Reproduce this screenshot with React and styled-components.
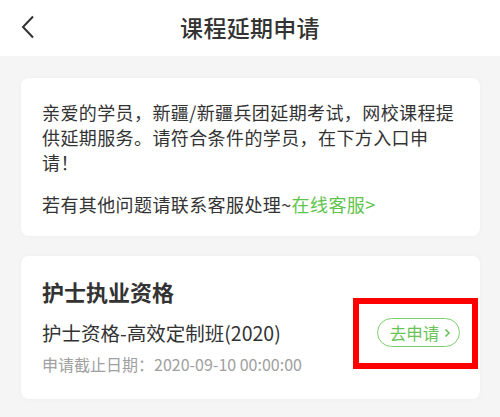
import React from 'react';
import styled, { createGlobalStyle } from 'styled-components';

const GlobalStyle = createGlobalStyle`
  html, body {
    margin: 0;
    padding: 0;
    background: #f5f5f5;
  }
  body {
    font-family: "Noto Sans CJK SC", "Noto Sans", "Liberation Sans", sans-serif;
    color: #333;
  }
`;

const Page = styled.div`
  width: 500px;
  height: 417px;
  background: #f5f5f5;
  overflow: hidden;
`;

const Header = styled.header`
  height: 56px;
  background: #fff;
  display: flex;
  align-items: center;
  justify-content: center;
  position: relative;
`;

const BackButton = styled.button`
  position: absolute;
  left: 16px;
  top: 11px;
  width: 24px;
  height: 32px;
  padding: 0;
  border: 0;
  background: none;
  display: flex;
  align-items: center;
  justify-content: center;
`;

const Title = styled.h1`
  margin: 0 0 2px;
  font-size: 23px;
  font-weight: 500;
  color: #333;
  letter-spacing: 0.3px;
`;

const Body = styled.main`
  padding: 22px 20px 0 21px;
  display: flex;
  flex-direction: column;
  gap: 20px;
`;

const Card = styled.section`
  background: #fff;
  border-radius: 8px;
  box-shadow: 0 0 6px rgba(0, 0, 0, 0.03);
  padding: ${p => p.$pad};
`;

const Para = styled.p`
  margin: 0 0 ${p => p.$gap || 0}px;
  font-size: 18px;
  line-height: 25px;
  letter-spacing: 0.4px;
  color: #333;
`;

const Link = styled.a`
  color: #5fc44d;
  text-decoration: none;
`;

const CourseGroup = styled.h2`
  margin: 0 0 12px;
  font-size: 22px;
  line-height: 30px;
  font-weight: 700;
  color: #333;
`;

const CourseRow = styled.div`
  display: flex;
  align-items: center;
  justify-content: space-between;
  padding-right: 20px;
`;

const CourseName = styled.div`
  font-size: 19.5px;
  line-height: 28px;
  color: #333;
`;

const Deadline = styled.div`
  margin-top: 6px;
  font-size: 16px;
  line-height: 22px;
  color: #a0a0a0;
`;

const ApplyWrap = styled.div`
  position: relative;
`;

const ApplyButton = styled.button`
  width: 83px;
  height: 29px;
  box-sizing: border-box;
  border: 1px solid #7ccf6c;
  border-radius: 15px;
  background: #fff;
  color: #68c456;
  font-family: inherit;
  font-size: 16.5px;
  padding: 0 0 0 4px;
  display: flex;
  align-items: center;
  justify-content: center;
  gap: 5px;
`;

const Highlight = styled.div`
  position: absolute;
  top: -20px;
  left: -24px;
  right: -18px;
  bottom: -22px;
  border: 6px solid #ff0000;
  pointer-events: none;
`;

export default function App() {
  return (
    <Page>
      <GlobalStyle />
      <Header>
        <BackButton aria-label="返回">
          <svg width="14" height="24" viewBox="0 0 14 24">
            <path d="M12 1.5 L2 12 L12 22.5" fill="none" stroke="#333" strokeWidth="2" />
          </svg>
        </BackButton>
        <Title>课程延期申请</Title>
      </Header>
      <Body>
        <Card $pad="22px 20px 19px 21px">
          <Para $gap={17}>
            亲爱的学员，新疆/新疆兵团延期考试，网校课程提供延期服务。请符合条件的学员，在下方入口申请！
          </Para>
          <Para>
            若有其他问题请联系客服处理~<Link href="#">在线客服&gt;</Link>
          </Para>
        </Card>
        <Card $pad="20px 0 24px 21px">
          <CourseGroup>护士执业资格</CourseGroup>
          <CourseRow>
            <CourseName>护士资格-高效定制班(2020)</CourseName>
            <ApplyWrap>
              <ApplyButton>
                去申请
                <svg width="7" height="10" viewBox="0 0 7 10">
                  <path d="M1.5 1.5 L5 5 L1.5 8.5" fill="none" stroke="#68c456" strokeWidth="1.6" />
                </svg>
              </ApplyButton>
              <Highlight />
            </ApplyWrap>
          </CourseRow>
          <Deadline>申请截止日期：2020-09-10 00:00:00</Deadline>
        </Card>
      </Body>
    </Page>
  );
}
